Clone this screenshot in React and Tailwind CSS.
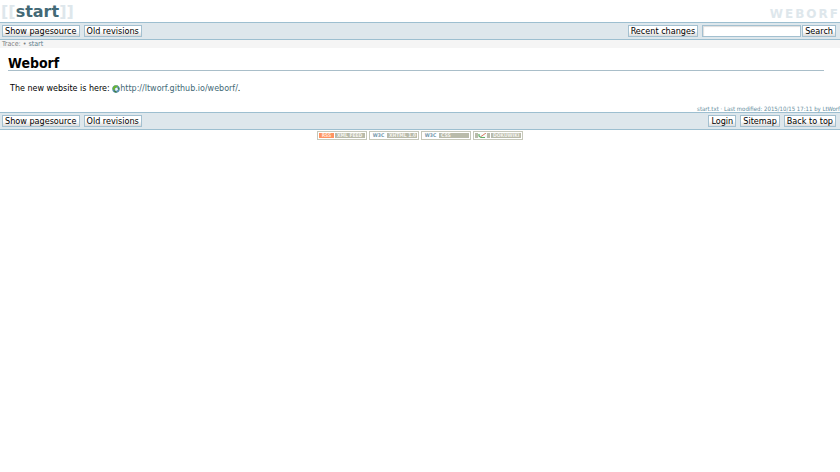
function ActionButton({ children, type = "button" }) {
  return (
    <button
      type={type}
      className="h-3 shrink-0 whitespace-nowrap border border-[#a3c0d0] bg-linear-to-b from-white from-50% to-[#dcdcdc] px-[2px] font-['DejaVu_Sans_Condensed','DejaVu_Sans',sans-serif] text-[9px] leading-[9px] text-black"
    >
      {children}
    </button>
  );
}

function Bar({ left, right }) {
  return (
    <div className="flex h-[18px] items-start justify-between border-y border-[#9dbfd0] bg-[#dee7ec] pt-[2px] pl-[2px] pr-1">
      <div className="flex gap-1">{left}</div>
      <div className="flex gap-1">{right}</div>
    </div>
  );
}

function Badge({ label, text, tone, children }) {
  return (
    <a href="#badge" aria-label={text} className="flex h-[9px] w-[50px] border border-[#c6c8ba] bg-white p-px font-['DejaVu_Sans_Condensed','DejaVu_Sans',sans-serif] text-[5px] leading-[5px] font-bold">
      <span className={`flex w-[15px] shrink-0 items-center justify-center ${tone}`}>{children || label}</span>
      <span className="ml-px flex min-w-0 flex-1 items-center overflow-hidden whitespace-nowrap bg-[#b9bbaa] pl-[2px] text-[#f4f4ee]">{text}</span>
    </a>
  );
}

function Globe() {
  return (
    <svg viewBox="0 0 16 16" className="inline-block size-2 align-[-2px]" aria-hidden="true">
      <circle cx="8" cy="8" r="7.5" fill="#5b93b8" />
      <path d="M1 6 5 1l7 0-2 4-4 1-1 4-3 0z" fill="#6cb52f" />
      <path d="M3 11l4 0 3 4-4 0z" fill="#3f7f36" />
      <path d="M12 4l3 3-1 3-2-2z" fill="#4c8f3a" />
      <path d="M6 7 10 5l2 4-2 2-3 1z" fill="#f2f7fc" />
    </svg>
  );
}

export default function App() {
  return (
    <div className="min-h-screen bg-white font-['DejaVu_Sans','Verdana',sans-serif] text-[8px] text-black">
      <header>
        <div className="flex h-[22px] items-center justify-between pl-px">
          <h1 className="pt-[2px] text-[16px] leading-5 font-bold text-[#dee7ec]">
            [[<a href="#start" className="text-[#436976]">start</a>]]
          </h1>
          <a href="#weborf" className="pt-[6px] text-[12px] leading-4 font-bold tracking-[2px] text-[#dee7ec]">WEBORF</a>
        </div>
        <Bar
          left={<><ActionButton>Show pagesource</ActionButton><ActionButton>Old revisions</ActionButton></>}
          right={
            <>
              <ActionButton>Recent changes</ActionButton>
              <form className="flex gap-px" onSubmit={(e) => e.preventDefault()}>
                <input aria-label="Search" type="text" className="h-3 w-[99px] border border-[#a3c0d0] bg-white px-[2px] text-[9px] shadow-[inset_1px_1px_1px_#dddddd] outline-none" />
                <ActionButton type="submit">Search</ActionButton>
              </form>
            </>
          }
        />
        <nav className="h-2 bg-[#f5f5f5] pl-[2px] font-['DejaVu_Sans_Condensed','DejaVu_Sans',sans-serif] text-[7px] leading-2">
          <span className="text-[#808080]">Trace: • </span>
          <a href="#start" className="text-[#5a7d89]">start</a>
        </nav>
      </header>
      <main className="px-4 pl-2 pt-2">
        <h2 className="border-b border-[#a9bec9] font-['DejaVu_Sans_Condensed','DejaVu_Sans',sans-serif] text-[14px] leading-[14px] font-bold">Weborf</h2>
        <p className="pl-[2px] pt-3 leading-[11px]">
          The new website is here: <a href="http://ltworf.github.io/weborf/" className="text-[#436976]"><Globe />http://ltworf.github.io/weborf/</a>.
        </p>
      </main>
      <footer>
        <p className="pt-[11px] text-right font-['DejaVu_Sans_Condensed','DejaVu_Sans',sans-serif] text-[6px] leading-[7px] text-[#638c9c]">start.txt · Last modified: 2015/10/15 17:11 by LtWorf</p>
        <Bar
          left={<><ActionButton>Show pagesource</ActionButton><ActionButton>Old revisions</ActionButton></>}
          right={<><ActionButton>Login</ActionButton><ActionButton>Sitemap</ActionButton><ActionButton>Back to top</ActionButton></>}
        />
        <div className="flex justify-center gap-[2px] pt-px">
          <Badge label="RSS" text="XML FEED" tone="bg-[#ff9361] text-[#ffe4d6]" />
          <Badge label="W3C" text="XHTML 1.0" tone="bg-white text-[#7398ad]" />
          <Badge label="W3C" text="CSS" tone="bg-white text-[#7398ad]" />
          <Badge text="DOKUWIKI" tone="bg-[#b9bbaa]">
            <svg viewBox="0 0 15 5" className="h-full w-full" aria-hidden="true">
              <path d="M3 0h9v5H3z" fill="#f8fbf8" />
              <path d="M4 1v2l2 1.500h4" fill="none" stroke="#65ad69" strokeWidth="1.200" />
              <path d="m6 3.500 5-3.500" stroke="#d87b65" />
            </svg>
          </Badge>
        </div>
      </footer>
    </div>
  );
}
